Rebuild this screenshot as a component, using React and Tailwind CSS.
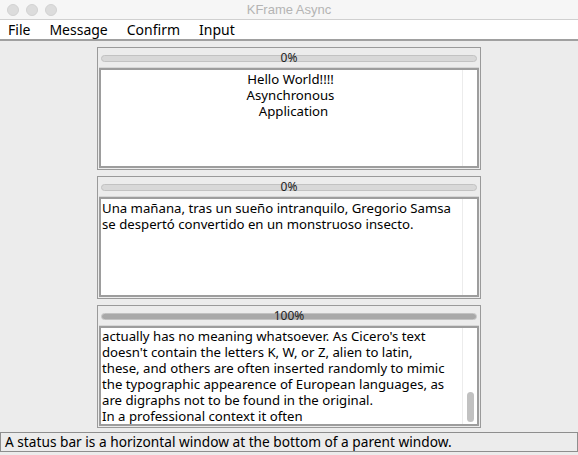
import React from 'react';

const font = { fontFamily: '"Noto Sans", "DejaVu Sans", sans-serif' };

const Progress = ({ value }) => (
    <div className="relative h-[14px] flex items-center px-[2px]">
        <div className="w-full h-[7px] rounded-full bg-[#d8d8d8] border border-[#c2c2c2] overflow-hidden">
            <div className="h-full bg-[#a9a9a9]" style={{ width: `${value}%` }}></div>
        </div>
        <span className="absolute inset-0 flex items-center justify-center text-[12px] leading-none text-[#222]">{value}%</span>
    </div>
);

const Panel = ({ value, children, thumb }) => (
    <div className="border border-[#9a9a9a] bg-[#ececec] p-[1px] h-[123px] flex flex-col">
        <div className="border-b border-[#d6d6d6] pt-[2px] pb-[2px]">
            <Progress value={value} />
        </div>
        <div className="flex-1 border-2 border-[#9d9d9d] bg-white flex overflow-hidden">
            <div className="flex-1 overflow-hidden text-[13.2px] leading-[16px] text-black px-[1px]">{children}</div>
            <div className="w-[15px] border-l border-[#ececec] flex justify-center">
                {thumb && <div className="mt-auto mb-[2px] w-[7px] h-[30px] rounded-full bg-[#c1c1c1]"></div>}
            </div>
        </div>
    </div>
);

export default function App() {
    return (
        <div className="w-[578px] h-[455px] bg-[#ececec] flex flex-col overflow-hidden" style={font}>
            {/* Title bar */}
            <div className="relative h-[19px] bg-[#f6f6f6] flex items-center px-[7px] gap-[7px] shrink-0">
                <span className="w-[12px] h-[12px] rounded-full bg-[#dcdcdc] border border-[#d2d2d2]"></span>
                <span className="w-[12px] h-[12px] rounded-full bg-[#dcdcdc] border border-[#d2d2d2]"></span>
                <span className="w-[12px] h-[12px] rounded-full bg-[#dcdcdc] border border-[#d2d2d2]"></span>
                <span className="absolute inset-0 flex items-center justify-center text-[13px] text-[#b4b4b4]" style={{ fontFamily: '"Liberation Sans", Arial, sans-serif' }}>KFrame Async</span>
            </div>

            {/* Menu bar */}
            <div className="h-[22px] bg-white border-t border-[#d0d0d0] border-b-2 border-b-[#a0a0a0] flex items-center gap-[19px] pl-[8px] text-[14px] text-black shrink-0">
                <span>File</span>
                <span>Message</span>
                <span>Confirm</span>
                <span>Input</span>
            </div>

            {/* Panels */}
            <div className="flex-1 flex flex-col items-center gap-[6px] pt-[6px]">
                <div className="w-[384px]">
                    <Panel value={0}>
                        <div className="text-center pl-[18px] pt-[1px]">
                            <div>Hello World!!!!</div>
                            <div>Asynchronous</div>
                            <div className="pl-[6px]">Application</div>
                        </div>
                    </Panel>
                </div>
                <div className="w-[384px]">
                    <Panel value={0}>
                        <div className="pt-[1px]">
                            <div>Una mañana, tras un sueño intranquilo, Gregorio Samsa</div>
                            <div>se despertó convertido en un monstruoso insecto.</div>
                        </div>
                    </Panel>
                </div>
                <div className="w-[384px]">
                    <Panel value={100} thumb>
                        <div>
                            <div>actually has no meaning whatsoever. As Cicero's text</div>
                            <div>doesn't contain the letters K, W, or Z, alien to latin,</div>
                            <div>these, and others are often inserted randomly to mimic</div>
                            <div>the typographic appearence of European languages, as</div>
                            <div>are digraphs not to be found in the original.</div>
                            <div>In a professional context it often</div>
                        </div>
                    </Panel>
                </div>
            </div>

            {/* Status bar */}
            <div className="h-[20px] border border-[#8e8e8e] bg-[#ececec] flex items-center pl-[4px] text-[13.7px] text-black shrink-0 mb-[3px]">
                A status bar is a horizontal window at the bottom of a parent window.
            </div>
        </div>
    );
}
